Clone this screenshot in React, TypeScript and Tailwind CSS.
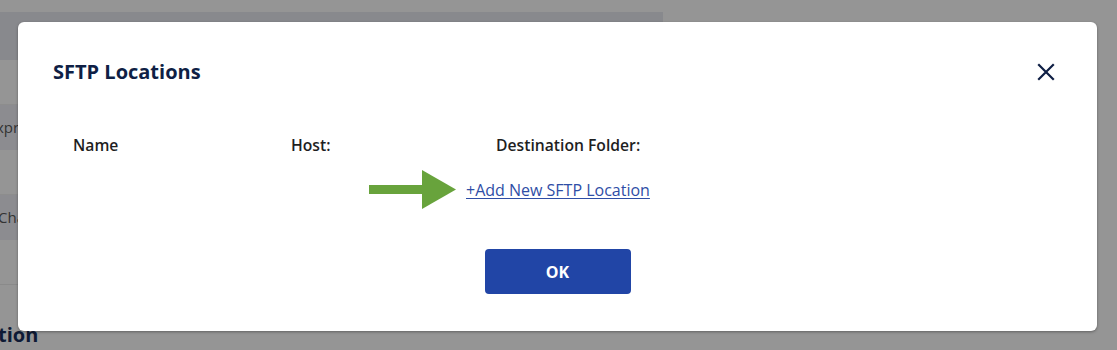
import React from 'react';

const font = { fontFamily: '"Open Sans", "Noto Sans", sans-serif' };

const App: React.FC = () => {
  return (
    <div className="relative h-[350px] w-full overflow-hidden bg-[#959595]" style={font}>
      {/* Page behind the overlay */}
      <div className="pt-[12px]">
        <div className="h-[48px] w-[663px] bg-[#88898d]"></div>
        <div className="w-[663px]">
          <div className="h-[45px] border-b border-[#8d8d8d]"></div>
          <div className="flex h-[45px] items-center bg-[#8c8c90] text-[15px] text-[#333]">
            <span className="-ml-[4px]">xpress</span>
          </div>
          <div className="h-[45px] border-b border-[#8d8d8d]"></div>
          <div className="flex h-[45px] items-center bg-[#8c8c90] text-[15px] text-[#333]">
            <span className="-ml-[2px]">Change</span>
          </div>
          <div className="h-[45px] border-b border-[#8a8a8a]"></div>
        </div>
        <div className="-ml-[2px] mt-[40px] text-[20px] font-bold leading-none text-[#0e1a35]">tion</div>
      </div>

      {/* Modal */}
      <div className="absolute inset-0 pl-[18px] pt-[22px]">
        <div className="flex h-[309px] w-[1079px] flex-col rounded-[6px] bg-white shadow-[0_1px_3px_rgba(0,0,0,0.35)]">
          <div className="flex items-center justify-between pl-[35px] pr-[42px] pt-[37px]">
            <h2 className="text-[20px] font-bold leading-[26px] text-[#0f1f45]">SFTP Locations</h2>
            <button aria-label="Close" className="text-[#0f1f45]">
              <svg width="18" height="18" viewBox="0 0 18 18" fill="none" stroke="currentColor" strokeWidth="2.2" strokeLinecap="square">
                <path d="M2 2L16 16M16 2L2 16" />
              </svg>
            </button>
          </div>

          <div className="mt-[50px] flex pl-[55px] text-[15.7px] font-semibold leading-[20px] text-[#1f1f1f]">
            <div className="w-[218px]">Name</div>
            <div className="w-[205px]">Host:</div>
            <div>Destination Folder:</div>
          </div>

          <div className="mt-[15px] flex items-center pl-[351px]">
            <svg width="88" height="40" viewBox="0 0 88 40" className="mr-[9px]">
              <rect x="0" y="15" width="54" height="9" fill="#68a33c" />
              <polygon points="53,0 87,19.5 53,39" fill="#68a33c" />
            </svg>
            <a href="#" className="text-[16px] leading-[20px] text-[#2f4ea6] underline underline-offset-2">+Add New SFTP Location</a>
          </div>

          <div className="mt-[39px] flex justify-center">
            <button className="h-[45px] w-[146px] rounded-[4px] bg-[#2145a6] text-[16px] font-bold text-white">OK</button>
          </div>
        </div>
      </div>
    </div>
  );
};

export default App;
